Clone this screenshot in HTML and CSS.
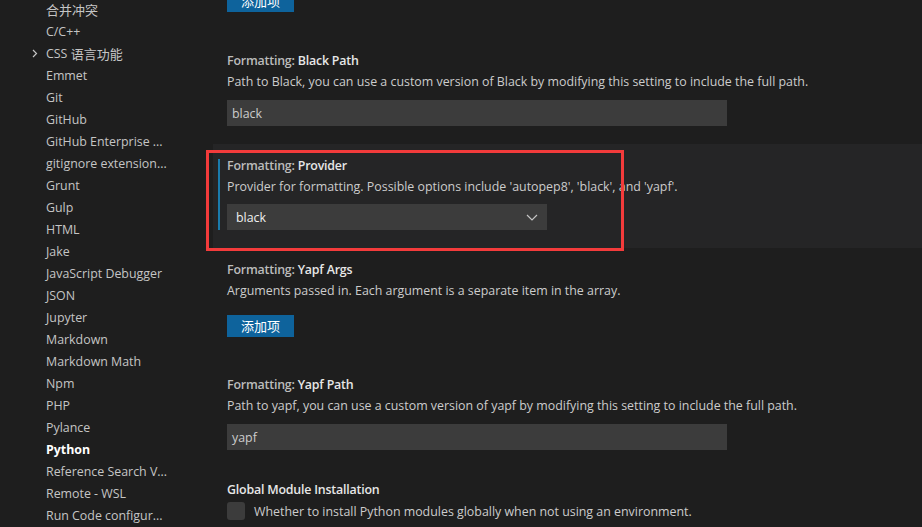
FILE: index.html
```html
<!DOCTYPE html>
<html lang="zh-CN">
<head>
<meta charset="utf-8">
<title>Settings</title>
<link rel="stylesheet" href="styles.css">
</head>
<body>
<div class="layout">
  <nav class="sidebar">
    <ul class="tree">
      <li class="row"><span class="cjk">合并冲突</span></li>
      <li class="row">C/C++</li>
      <li class="row has-twistie"><span class="twistie"><svg width="6" height="9" viewBox="0 0 6 9"><polyline points="1,1 4.5,4.5 1,8" fill="none" stroke="#c5c5c5" stroke-width="1.2"/></svg></span>CSS&nbsp;<span class="cjk">语言功能</span></li>
      <li class="row">Emmet</li>
      <li class="row">Git</li>
      <li class="row">GitHub</li>
      <li class="row">GitHub Enterprise ...</li>
      <li class="row">gitignore extension...</li>
      <li class="row">Grunt</li>
      <li class="row">Gulp</li>
      <li class="row">HTML</li>
      <li class="row">Jake</li>
      <li class="row">JavaScript Debugger</li>
      <li class="row">JSON</li>
      <li class="row">Jupyter</li>
      <li class="row">Markdown</li>
      <li class="row">Markdown Math</li>
      <li class="row">Npm</li>
      <li class="row">PHP</li>
      <li class="row">Pylance</li>
      <li class="row active">Python</li>
      <li class="row">Reference Search V...</li>
      <li class="row">Remote - WSL</li>
      <li class="row">Run Code configur...</li>
    </ul>
  </nav>
  <main class="main">
    <section class="setting setting-top">
      <button class="btn">添加项</button>
    </section>

    <section class="setting">
      <div class="title"><span class="cat">Formatting: </span>Black Path</div>
      <div class="desc">Path to Black, you can use a custom version of Black by modifying this setting to include the full path.</div>
      <div class="input">black</div>
    </section>

    <section class="setting focused">
      <div class="title"><span class="cat">Formatting: </span>Provider</div>
      <div class="desc">Provider for formatting. Possible options include 'autopep8', 'black', and 'yapf'.</div>
      <div class="select"><span>black</span><svg class="chev" width="12" height="7" viewBox="0 0 12 7"><polyline points="1,1 6,6 11,1" fill="none" stroke="#c5c5c5" stroke-width="1.2"/></svg></div>
      <div class="annotation"></div>
    </section>

    <section class="setting setting-array">
      <div class="title"><span class="cat">Formatting: </span>Yapf Args</div>
      <div class="desc">Arguments passed in. Each argument is a separate item in the array.</div>
      <button class="btn">添加项</button>
    </section>

    <section class="setting">
      <div class="title"><span class="cat">Formatting: </span>Yapf Path</div>
      <div class="desc">Path to yapf, you can use a custom version of yapf by modifying this setting to include the full path.</div>
      <div class="input">yapf</div>
    </section>

    <section class="setting">
      <div class="title">Global Module Installation</div>
      <div class="check-row"><span class="checkbox"></span><span class="check-label">Whether to install Python modules globally when not using an environment.</span></div>
    </section>
  </main>
</div>
</body>
</html>
```
FILE: styles.css
```css
html, body {
  margin: 0;
  padding: 0;
  height: 527px;
  overflow: hidden;
  background: #1e1e1e;
  font-family: "Open Sans", "Noto Sans CJK SC", sans-serif;
  font-size: 12.4px;
  color: #cccccc;
}

.layout {
  display: flex;
  height: 527px;
}

.sidebar {
  width: 213px;
  flex: none;
}

.tree {
  list-style: none;
  margin: -2px 0 0 0;
  padding: 0;
}

.row {
  height: 22px;
  box-sizing: border-box;
  padding-top: 1px;
  padding-left: 46px;
  color: #c5c5c5;
  white-space: nowrap;
  display: flex;
  align-items: center;
}

.cjk {
  font-family: "Noto Sans CJK SC", sans-serif;
  font-size: 13px;
}

.row.has-twistie {
  padding-left: 30px;
}

.twistie {
  width: 16px;
  display: flex;
  align-items: center;
  justify-content: flex-start;
  padding-left: 2px;
  box-sizing: border-box;
}

.row.active {
  color: #ffffff;
  font-weight: 700;
}

.main {
  flex: 1;
  display: flex;
  flex-direction: column;
}

.setting {
  position: relative;
  padding: 13px 14px 18px 14px;
}

.setting-top {
  margin-top: -10px;
  padding: 0 14px 27px 14px;
}

.setting.focused {
  background: #252526;
}

.setting.focused::before {
  content: "";
  position: absolute;
  left: 5px;
  top: 15px;
  bottom: 18px;
  width: 2px;
  background: #1a7bad;
}

.title {
  line-height: 18px;
  font-weight: 600;
  letter-spacing: -0.2px;
  color: #e7e7e7;
  white-space: nowrap;
}

.title .cat {
  color: #bcbcbc;
}

.desc {
  margin-top: 3px;
  line-height: 18px;
  color: #cccccc;
  white-space: nowrap;
}

.input {
  margin-top: 9px;
  width: 500px;
  height: 26px;
  line-height: 24px;
  box-sizing: border-box;
  padding: 2px 0 0 5px;
  background: #3c3c3c;
  color: #cccccc;
}

.select {
  margin-top: 8px;
  width: 320px;
  height: 26px;
  box-sizing: border-box;
  padding: 0 9px;
  background: #3c3c3c;
  color: #f0f0f0;
  display: flex;
  align-items: center;
  justify-content: space-between;
}

.btn {
  display: block;
  width: 67px;
  height: 22px;
  padding: 0;
  border: none;
  background: #0e639c;
  color: #ffffff;
  font-family: "Noto Sans CJK SC", sans-serif;
  font-size: 13px;
  line-height: 22px;
  text-align: center;
}

.setting-array {
  padding-bottom: 26px;
}

.setting-array .btn {
  margin-top: 15px;
}

.annotation {
  position: absolute;
  left: -7px;
  top: 6px;
  width: 418px;
  height: 101px;
  box-sizing: border-box;
  border: 3px solid #f33b3b;
}

.check-row {
  margin-top: 3px;
  display: flex;
  align-items: center;
  gap: 9px;
}

.checkbox {
  width: 18px;
  height: 18px;
  border-radius: 3px;
  background: #3c3c3c;
  flex: none;
}

.check-label {
  white-space: nowrap;
  color: #cccccc;
}
```
